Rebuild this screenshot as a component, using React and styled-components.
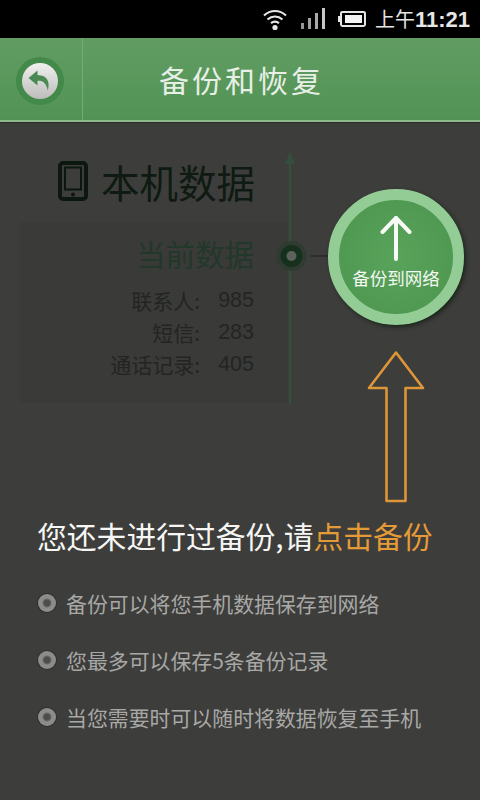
import React from "react";
import styled, { createGlobalStyle } from "styled-components";

const cjk = `"Noto Sans CJK SC", "Liberation Sans", sans-serif`;

const GlobalStyle = createGlobalStyle`
  html, body {
    margin: 0;
    padding: 0;
    background: #3d3d3b;
  }
  * {
    box-sizing: border-box;
  }
`;

const Screen = styled.div`
  width: 480px;
  height: 800px;
  overflow: hidden;
  display: flex;
  flex-direction: column;
  background: #3d3d3b;
  font-family: ${cjk};
`;

// Status bar
const StatusBar = styled.div`
  height: 38px;
  flex: none;
  background: #000;
  display: flex;
  align-items: center;
  padding: 0 10px 0 263px;
  color: #e6e6e6;
`;

const Clock = styled.div`
  margin-left: 9px;
  font-size: 20px;
  line-height: 38px;
  white-space: nowrap;
`;

const ClockTime = styled.span`
  font-family: "Liberation Sans", sans-serif;
  font-weight: 700;
  font-size: 22px;
`;

// Header
const Header = styled.header`
  height: 84px;
  flex: none;
  display: flex;
  background: linear-gradient(#619d63, #529355);
  border-bottom: 2px solid #8dbb8b;
  box-shadow: 0 1px 0 #2b2b2a;
`;

const BackCell = styled.div`
  width: 83px;
  flex: none;
  display: flex;
  align-items: center;
  padding: 4px 0 0 16px;
  border-right: 1px solid #78aa79;
`;

const BackRing = styled.div`
  width: 48px;
  height: 48px;
  border-radius: 50%;
  background: #43894a;
  display: flex;
  align-items: center;
  justify-content: center;
`;

const BackButton = styled.div`
  width: 36px;
  height: 36px;
  border-radius: 50%;
  background: linear-gradient(#f0f0ee, #bdbdbb);
  display: flex;
  align-items: center;
  justify-content: center;
`;

const Title = styled.h1`
  margin: 0 0 0 76px;
  font-size: 30px;
  font-weight: 400;
  letter-spacing: 3px;
  line-height: 82px;
  color: #e8efe6;
`;

// Backup diagram
const Hero = styled.section`
  height: 380px;
  flex: none;
  display: flex;
  align-items: flex-start;
  padding: 30px 0 0 20px;
`;

const DataColumn = styled.div`
  width: 268px;
  flex: none;
`;

const DeviceTitle = styled.div`
  height: 70px;
  display: flex;
  align-items: center;
  justify-content: flex-end;
  gap: 13px;
  padding: 0 33px 13px 0;
  color: #0e1a12;
  font-size: 38.5px;
`;

const DataPanel = styled.div`
  height: 181px;
  padding: 9px 34px 0 0;
  background: rgba(50, 52, 48, 0.22);
  border-radius: 3px;
  text-align: right;
`;

const PanelTitle = styled.div`
  font-size: 29.5px;
  line-height: 44px;
  color: #22382a;
  margin-bottom: 9px;
`;

const DataRow = styled.div`
  display: flex;
  justify-content: flex-end;
  height: 32px;
  align-items: center;
  font-size: 21px;
  color: #232523;
`;

const DataValue = styled.span`
  width: 54px;
  font-family: "Liberation Sans", sans-serif;
  font-size: 21.5px;
`;

const Timeline = styled.svg`
  flex: none;
  overflow: visible;
`;

const ActionColumn = styled.div`
  display: flex;
  flex-direction: column;
  align-items: center;
  padding-top: 37px;
  gap: 26px;
`;

const UploadButton = styled.button`
  width: 136px;
  height: 136px;
  padding: 0;
  border: 11px solid #93cd95;
  border-radius: 50%;
  background: radial-gradient(circle, #59a35b 0%, #4c954f 100%);
  box-shadow: 2px 2px 4px rgba(15, 30, 15, 0.75);
  display: flex;
  flex-direction: column;
  align-items: center;
  font-family: ${cjk};
  color: #f4f8f2;
`;

const UploadLabel = styled.span`
  font-size: 17.5px;
  line-height: 24px;
  margin-top: 4px;
  white-space: nowrap;
`;

// Prompt and notes
const Prompt = styled.div`
  padding-left: 37px;
  margin-top: 11px;
  height: 44px;
  font-size: 29.8px;
  line-height: 44px;
  color: #f6f6f4;
  white-space: nowrap;
`;

const Highlight = styled.span`
  color: #e49b37;
`;

const NoteList = styled.ul`
  list-style: none;
  margin: 31px 0 0;
  padding: 0 0 0 38px;
  display: flex;
  flex-direction: column;
  gap: 27px;
`;

const Note = styled.li`
  display: flex;
  align-items: center;
  gap: 10px;
  height: 30px;
  font-size: 20.9px;
  color: #a8a8a6;
  white-space: nowrap;
`;

const Bullet = styled.span`
  width: 18px;
  height: 18px;
  flex: none;
  border-radius: 50%;
  background: radial-gradient(circle, #4d4d4b 0 3px, #8c8c8a 5px 100%);
  box-shadow: 0 0 0 1px #2f2f2e;
`;

const WifiIcon = () => (
  <svg width="24" height="24" viewBox="0 0 24 24" fill="none" stroke="#e6e6e6" strokeWidth="2.2">
    <path d="M1 8.5C7.5 2.5 16.5 2.5 23 8.5" />
    <path d="M4.5 12.5C9 8.5 15 8.5 19.5 12.5" />
    <path d="M8 16.2C10.5 14.2 13.5 14.2 16 16.2" />
    <circle cx="12" cy="20.5" r="2.6" fill="#e6e6e6" stroke="none" />
  </svg>
);

const SignalIcon = () => (
  <svg width="24" height="24" viewBox="0 0 24 24" fill="#c8c8c8" style={{ marginLeft: 14 }}>
    <rect x="0" y="16" width="3" height="6" opacity="0.75" />
    <rect x="7" y="11" width="3" height="11" opacity="0.8" />
    <rect x="14" y="6" width="3" height="16" opacity="0.85" />
    <rect x="21" y="1" width="3" height="21" />
  </svg>
);

const BatteryIcon = () => (
  <svg width="28" height="16" viewBox="0 0 28 16" style={{ marginLeft: 13 }}>
    <rect x="0" y="5" width="2" height="6" fill="#e6e6e6" />
    <rect x="3" y="1" width="24" height="14" rx="1.5" fill="none" stroke="#e6e6e6" strokeWidth="2" />
    <rect x="7" y="4" width="17" height="8" fill="#f4f4f4" />
  </svg>
);

const BackIcon = () => (
  <svg width="28" height="28" viewBox="0 0 28 28" fill="#4a8a52">
    <path d="M11.5 3.5 2.5 11l9 7.5v-4.6c4.6-.4 8.4 1.2 10.3 9.6 2.4-8.2-.2-15.4-10.3-15.6z" />
  </svg>
);

const PhoneIcon = () => (
  <svg width="30" height="40" viewBox="0 0 30 40" fill="none" stroke="#0b170f">
    <rect x="2" y="2" width="26" height="36" rx="3" strokeWidth="4" />
    <rect x="7" y="6.5" width="16" height="22" strokeWidth="2" />
    <circle cx="15" cy="33.5" r="2" fill="#0b170f" stroke="none" />
  </svg>
);

const UpArrowIcon = () => (
  <svg width="32" height="47" viewBox="0 0 32 47" fill="none" stroke="#f8faf6" strokeWidth="4" strokeLinecap="round" strokeLinejoin="round" style={{ marginTop: 15, flex: "none" }}>
    <path d="M16 3V44" />
    <path d="M2.5 17 16 3 29.5 17" />
  </svg>
);

const OutlineArrow = () => (
  <svg width="58" height="152" viewBox="0 0 58 152" fill="none" stroke="#dd9638" strokeWidth="2.6" strokeLinejoin="round">
    <path d="M29 1.5 56 37H38.5V150H19.5V37H2Z" />
  </svg>
);

const notes = [
  "备份可以将您手机数据保存到网络",
  "您最多可以保存5条备份记录",
  "当您需要时可以随时将数据恢复至手机",
];

const rows = [
  ["联系人:", "985"],
  ["短信:", "283"],
  ["通话记录:", "405"],
];

const App = () => {
  return (
    <Screen>
      <GlobalStyle />
      <StatusBar>
        <WifiIcon />
        <SignalIcon />
        <BatteryIcon />
        <Clock>
          上午<ClockTime>11:21</ClockTime>
        </Clock>
      </StatusBar>

      <Header>
        <BackCell>
          <BackRing>
            <BackButton>
              <BackIcon />
            </BackButton>
          </BackRing>
        </BackCell>
        <Title>备份和恢复</Title>
      </Header>

      <Hero>
        <DataColumn>
          <DeviceTitle>
            <PhoneIcon />
            <span>本机数据</span>
          </DeviceTitle>
          <DataPanel>
            <PanelTitle>当前数据</PanelTitle>
            {rows.map(([label, value]) => (
              <DataRow key={label}>
                <span>{label}</span>
                <DataValue>{value}</DataValue>
              </DataRow>
            ))}
          </DataPanel>
        </DataColumn>

        <Timeline width="40" height="252" viewBox="0 0 40 252">
          <path d="M2 0 7 12H-3Z" fill="#34503c" />
          <path d="M2 10V252" stroke="#34503c" strokeWidth="2" />
          <path d="M22 104H40" stroke="#2c2f2b" strokeWidth="2" />
          <circle cx="3.5" cy="104" r="15" fill="#2f3b30" />
          <circle cx="3.5" cy="104" r="11" fill="#17301d" />
          <circle cx="3.5" cy="104" r="5" fill="#5e625d" />
        </Timeline>

        <ActionColumn>
          <UploadButton type="button">
            <UpArrowIcon />
            <UploadLabel>备份到网络</UploadLabel>
          </UploadButton>
          <OutlineArrow />
        </ActionColumn>
      </Hero>

      <Prompt>
        您还未进行过备份,请<Highlight>点击备份</Highlight>
      </Prompt>

      <NoteList>
        {notes.map((note) => (
          <Note key={note}>
            <Bullet />
            {note}
          </Note>
        ))}
      </NoteList>
    </Screen>
  );
};

export default App;
